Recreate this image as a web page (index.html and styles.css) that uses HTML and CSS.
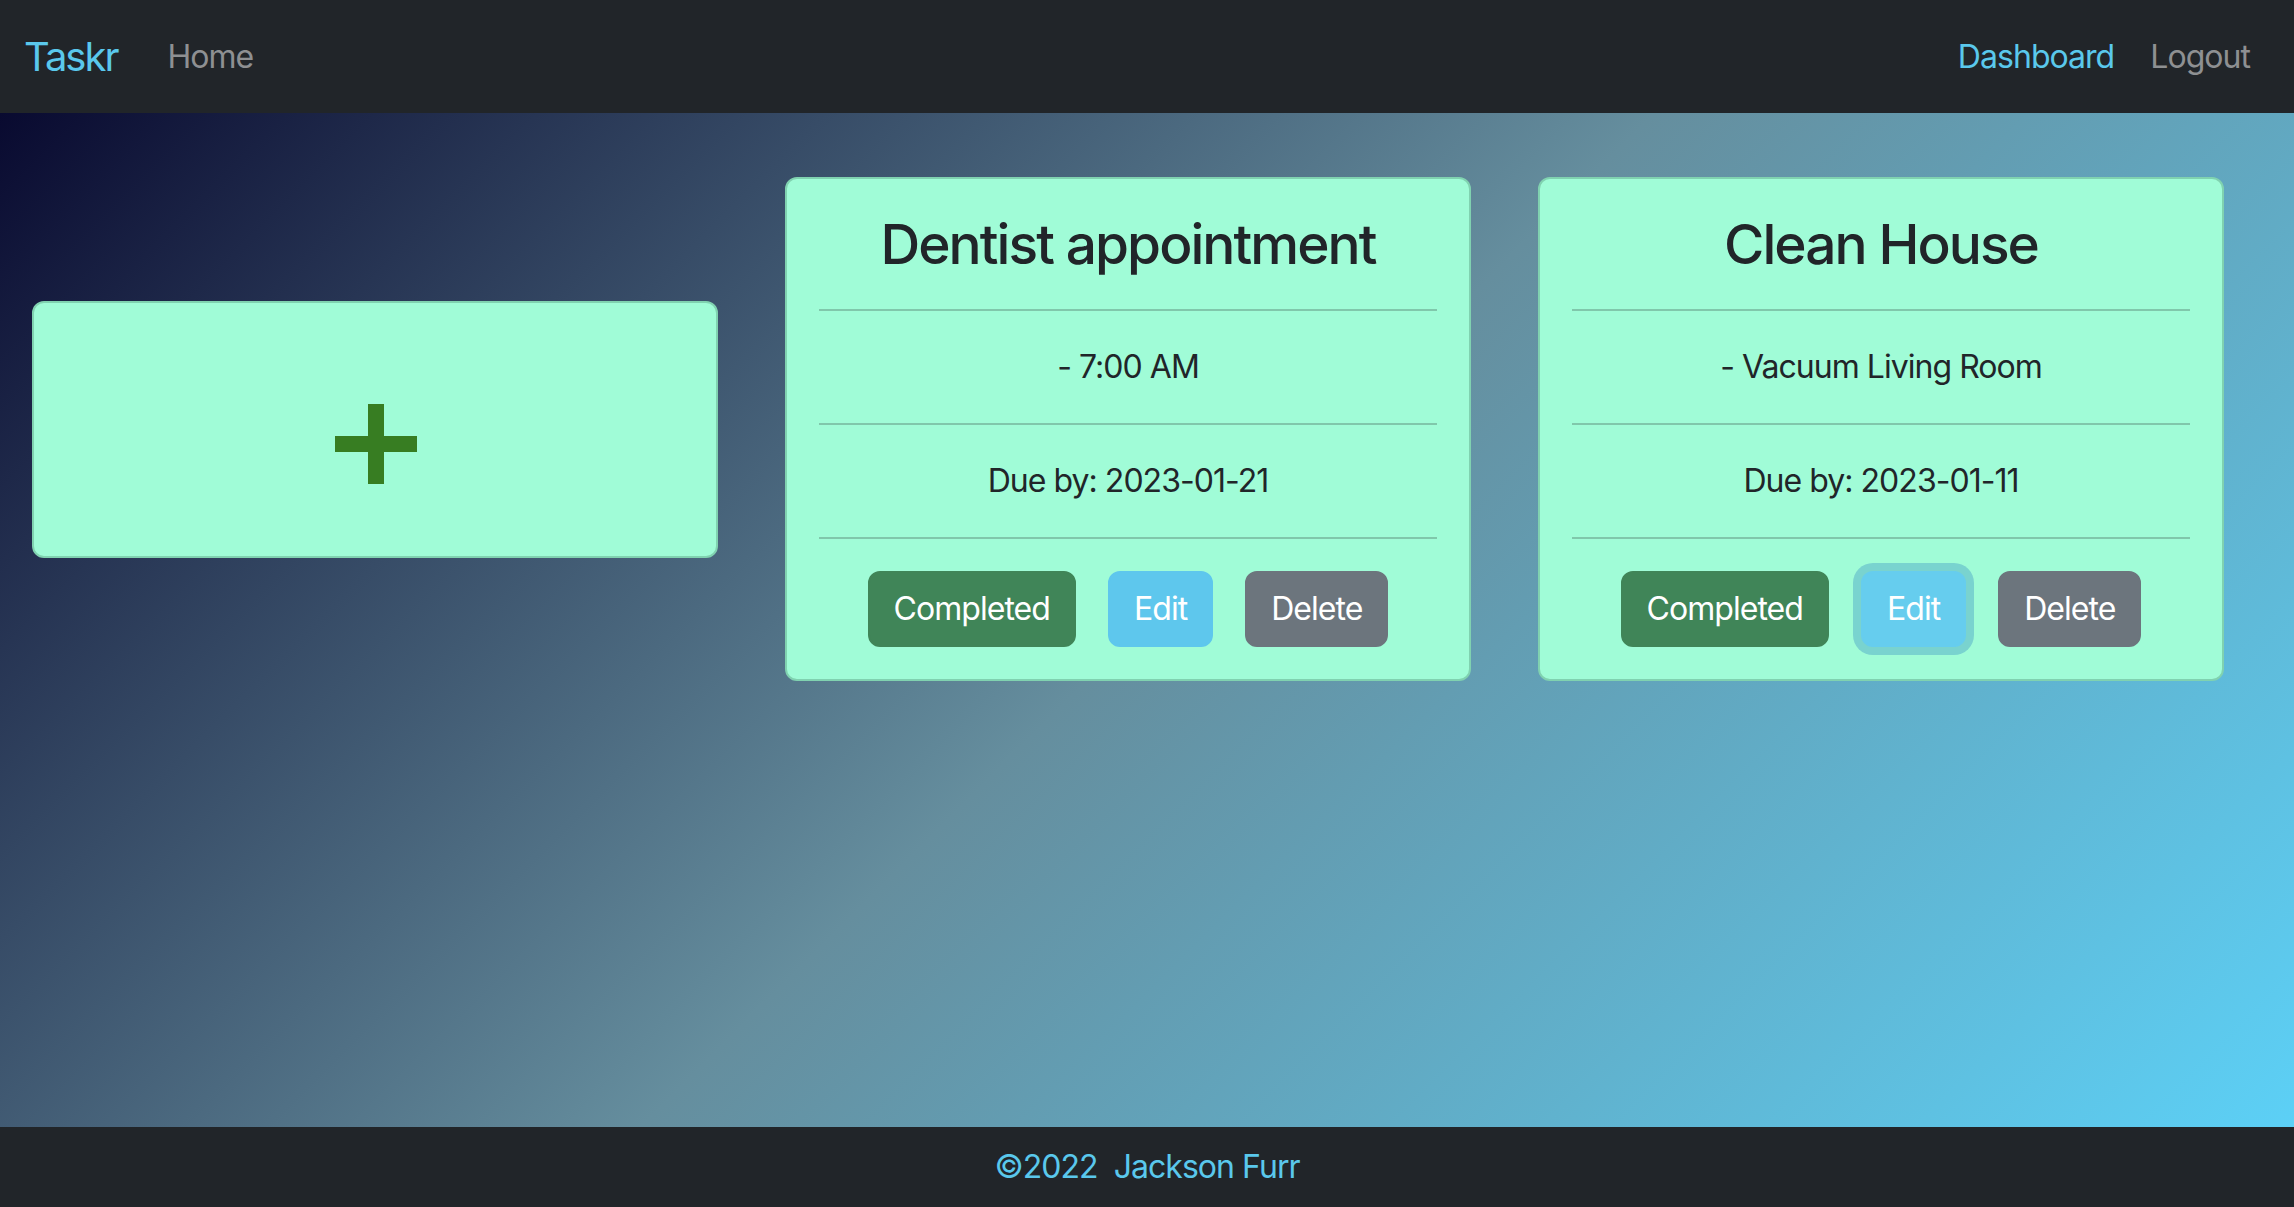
FILE: index.html
```html
<!DOCTYPE html>
<html lang="en">
<head>
<meta charset="utf-8">
<title>Taskr</title>
<link rel="stylesheet" href="styles.css">
</head>
<body>
<nav class="navbar">
  <div class="nav-group">
    <a class="brand" href="#">Taskr</a>
    <a class="nav-link" href="#">Home</a>
  </div>
  <div class="nav-group">
    <a class="nav-link active" href="#">Dashboard</a>
    <a class="nav-link" href="#">Logout</a>
  </div>
</nav>
<main class="main">
  <div class="board">
    <div class="card add-card">
      <svg class="plus" width="82" height="80" viewBox="0 0 82 80" aria-label="Add task">
        <rect x="33" y="0" width="16" height="80" fill="#377d22"/>
        <rect x="0" y="32" width="82" height="16" fill="#377d22"/>
      </svg>
    </div>
    <div class="card task-card">
      <h3 class="task-title">Dentist appointment</h3>
      <hr class="divider">
      <p class="task-line">- 7:00 AM</p>
      <hr class="divider">
      <p class="task-line">Due by: 2023-01-21</p>
      <hr class="divider">
      <div class="actions">
        <button class="btn btn-done">Completed</button>
        <button class="btn btn-edit">Edit</button>
        <button class="btn btn-delete">Delete</button>
      </div>
    </div>
    <div class="card task-card">
      <h3 class="task-title">Clean House</h3>
      <hr class="divider">
      <p class="task-line">- Vacuum Living Room</p>
      <hr class="divider">
      <p class="task-line">Due by: 2023-01-11</p>
      <hr class="divider">
      <div class="actions">
        <button class="btn btn-done">Completed</button>
        <button class="btn btn-edit focused">Edit</button>
        <button class="btn btn-delete">Delete</button>
      </div>
    </div>
  </div>
</main>
<footer class="footer">©2022&nbsp; Jackson Furr</footer>
</body>
</html>
```

FILE: styles.css
```css
* { box-sizing: border-box; }

html, body {
  margin: 0;
  height: 100%;
}

body {
  display: flex;
  flex-direction: column;
  font-family: Inter, "Noto Sans", "Liberation Sans", sans-serif;
  font-size: 32px;
  line-height: 1.5;
  letter-spacing: -0.03em;
  color: #212529;
  background: #212529;
}

a { text-decoration: none; }

.navbar {
  height: 113px;
  flex: 0 0 113px;
  background: #212529;
  display: flex;
  align-items: center;
  justify-content: space-between;
  padding: 0 26px 0 24px;
}

.nav-group {
  display: flex;
  align-items: center;
}

.brand {
  font-size: 40px;
  line-height: 60px;
  letter-spacing: -0.05em;
  color: #5ac8ec;
  margin-right: 32px;
}

.nav-link {
  font-size: 32px;
  line-height: 48px;
  padding: 0 18px;
  color: #8e9092;
}

.nav-link.active { color: #5ac8ec; }

.main {
  flex: 1 1 auto;
  background: linear-gradient(135deg, #090a30 0%, #658e9e 50%, #5cd0f6 100%);
}

.board {
  display: grid;
  grid-template-columns: repeat(3, 686px);
  column-gap: 67px;
  align-items: center;
  padding: 64px 0 0 32px;
}

.card {
  background: #a0fcd7;
  border: 2px solid #80d2b0;
  border-radius: 12px;
}

.add-card {
  height: 257px;
  display: flex;
  align-items: center;
  justify-content: center;
  padding-top: 29px;
  padding-left: 2px;
}

.task-card {
  padding: 32px;
  text-align: center;
}

.task-title {
  margin: 0 0 16px;
  font-size: 55px;
  line-height: 66px;
  font-weight: 500;
  letter-spacing: -0.035em;
  color: #212529;
}

.divider {
  margin: 32px 0;
  border: 0;
  border-top: 2px solid #80c7ab;
  height: 0;
}

.task-line {
  margin: 0 0 32px;
  font-size: 32px;
  line-height: 48px;
}

.actions {
  display: flex;
  justify-content: center;
  gap: 32px;
}

.btn {
  font-family: inherit;
  font-size: 32px;
  line-height: 48px;
  letter-spacing: -0.03em;
  padding: 12px 24px;
  border: 2px solid transparent;
  border-radius: 12px;
  color: #ffffff;
  cursor: pointer;
}

.btn-done { background: #408558; border-color: #408558; }
.btn-edit { background: #5ec7ed; border-color: #5ec7ed; }
.btn-delete { background: #6c757d; border-color: #6c757d; }

.btn-edit.focused {
  background: #66cdee;
  border-color: #66cdee;
  box-shadow: 0 0 0 8px #79d3cf;
}

.footer {
  flex: 0 0 80px;
  height: 80px;
  background: #212529;
  color: #5ac8ec;
  display: flex;
  align-items: center;
  justify-content: center;
  font-size: 32px;
  white-space: pre;
}
```
